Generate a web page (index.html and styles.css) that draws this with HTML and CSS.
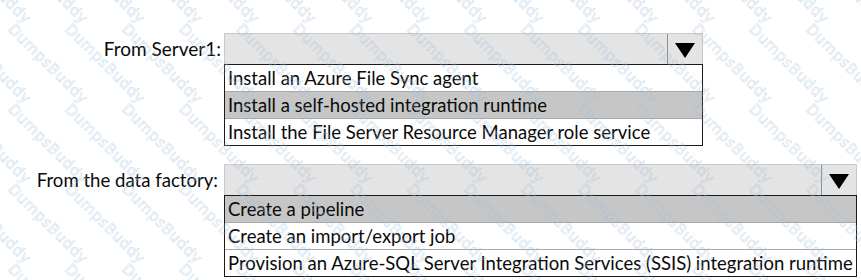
FILE: index.html
```html
<!DOCTYPE html>
<html>
<head>
<meta charset="utf-8">
<link rel="stylesheet" href="styles.css">
</head>
<body>
<div class="page">
  <div class="question">
    <div class="label label-1">From Server1:</div>
    <div class="dropdown dd-1">
      <div class="dd-head">
        <div class="dd-field"></div>
        <div class="dd-btn"><span class="arrow"></span></div>
      </div>
      <div class="dd-list">
        <div class="opt">Install an Azure File Sync agent</div>
        <div class="opt sel">Install a self-hosted integration runtime</div>
        <div class="opt">Install the File Server Resource Manager role service</div>
      </div>
    </div>
  </div>
  <div class="question q2">
    <div class="label label-2">From the data factory:</div>
    <div class="dropdown dd-2">
      <div class="dd-head">
        <div class="dd-field"></div>
        <div class="dd-btn"><span class="arrow"></span></div>
      </div>
      <div class="dd-list">
        <div class="opt sel">Create a pipeline</div>
        <div class="opt">Create an import/export job</div>
        <div class="opt">Provision an Azure-SQL Server Integration Services (SSIS) integration runtime</div>
      </div>
    </div>
  </div>
  <div class="watermark">
    <span>DumpsBuddy</span><span>DumpsBuddy</span><span>DumpsBuddy</span><span>DumpsBuddy</span><span>DumpsBuddy</span><span>DumpsBuddy</span><span>DumpsBuddy</span><span>DumpsBuddy</span><span>DumpsBuddy</span><span>DumpsBuddy</span><span>DumpsBuddy</span><span>DumpsBuddy</span><span>DumpsBuddy</span><span>DumpsBuddy</span><span>DumpsBuddy</span><span>DumpsBuddy</span>
    <span>DumpsBuddy</span><span>DumpsBuddy</span><span>DumpsBuddy</span><span>DumpsBuddy</span><span>DumpsBuddy</span><span>DumpsBuddy</span><span>DumpsBuddy</span><span>DumpsBuddy</span><span>DumpsBuddy</span><span>DumpsBuddy</span><span>DumpsBuddy</span><span>DumpsBuddy</span><span>DumpsBuddy</span><span>DumpsBuddy</span><span>DumpsBuddy</span><span>DumpsBuddy</span>
    <span>DumpsBuddy</span><span>DumpsBuddy</span><span>DumpsBuddy</span><span>DumpsBuddy</span><span>DumpsBuddy</span><span>DumpsBuddy</span><span>DumpsBuddy</span><span>DumpsBuddy</span><span>DumpsBuddy</span><span>DumpsBuddy</span><span>DumpsBuddy</span><span>DumpsBuddy</span><span>DumpsBuddy</span><span>DumpsBuddy</span><span>DumpsBuddy</span><span>DumpsBuddy</span>
    <span>DumpsBuddy</span><span>DumpsBuddy</span><span>DumpsBuddy</span><span>DumpsBuddy</span><span>DumpsBuddy</span><span>DumpsBuddy</span><span>DumpsBuddy</span><span>DumpsBuddy</span><span>DumpsBuddy</span><span>DumpsBuddy</span><span>DumpsBuddy</span><span>DumpsBuddy</span><span>DumpsBuddy</span><span>DumpsBuddy</span><span>DumpsBuddy</span><span>DumpsBuddy</span>
    <span>DumpsBuddy</span><span>DumpsBuddy</span><span>DumpsBuddy</span><span>DumpsBuddy</span><span>DumpsBuddy</span><span>DumpsBuddy</span><span>DumpsBuddy</span><span>DumpsBuddy</span><span>DumpsBuddy</span><span>DumpsBuddy</span><span>DumpsBuddy</span><span>DumpsBuddy</span><span>DumpsBuddy</span><span>DumpsBuddy</span><span>DumpsBuddy</span><span>DumpsBuddy</span>
  </div>
</div>
</body>
</html>
```

FILE: styles.css
```css
html, body {
  margin: 0;
  padding: 0;
  background: #ffffff;
}
.page {
  position: relative;
  width: 861px;
  height: 280px;
  overflow: hidden;
  font-family: Lato, "Open Sans", sans-serif;
  font-size: 18.5px;
  color: #0a0a0a;
  padding-top: 33px;
  box-sizing: border-box;
}
.question {
  display: grid;
  grid-template-columns: 224px auto;
  align-items: start;
}
.q2 {
  margin-top: 18px;
}
.label {
  height: 31px;
  display: flex;
  align-items: center;
  justify-content: flex-end;
  font-size: 19px;
}
.label-1 { padding-right: 3px; }
.label-2 { padding-right: 6px; font-size: 18.6px; }
.dd-1 { width: 479px; }
.dd-2 { width: 633px; }
.dd-head {
  display: flex;
  height: 31px;
  box-sizing: border-box;
  border: 1px solid #c9c9c9;
  border-bottom: none;
  background: #e4e4e4;
}
.dd-field {
  flex: 1;
  border-right: 1px solid #8f8f8f;
}
.dd-btn {
  width: 34px;
  display: flex;
  align-items: center;
  justify-content: center;
}
.arrow {
  width: 0;
  height: 0;
  border-left: 10px solid transparent;
  border-right: 10px solid transparent;
  border-top: 15px solid #000000;
  margin-top: 2px;
}
.dd-list {
  border: 1px solid #1a1a1a;
  background: #ffffff;
}
.opt {
  height: 26px;
  line-height: 27px;
  padding-left: 3px;
  white-space: nowrap;
  border-top: 1px solid #a8a8a8;
}
.opt:first-child {
  border-top: none;
}
.opt.sel {
  background: #c6c6c6;
}
.watermark {
  position: absolute;
  left: -40px;
  top: -60px;
  width: 960px;
  display: grid;
  grid-template-columns: repeat(16, 57px);
  grid-auto-rows: 80px;
  pointer-events: none;
}
.watermark span {
  display: block;
  width: 100px;
  font-family: "DejaVu Sans", sans-serif;
  font-size: 15px;
  letter-spacing: 0.5px;
  color: transparent;
  -webkit-text-stroke: 0.6px rgba(160, 192, 220, 0.5);
  transform: rotate(45deg);
  transform-origin: 0 0;
  white-space: nowrap;
}
```
